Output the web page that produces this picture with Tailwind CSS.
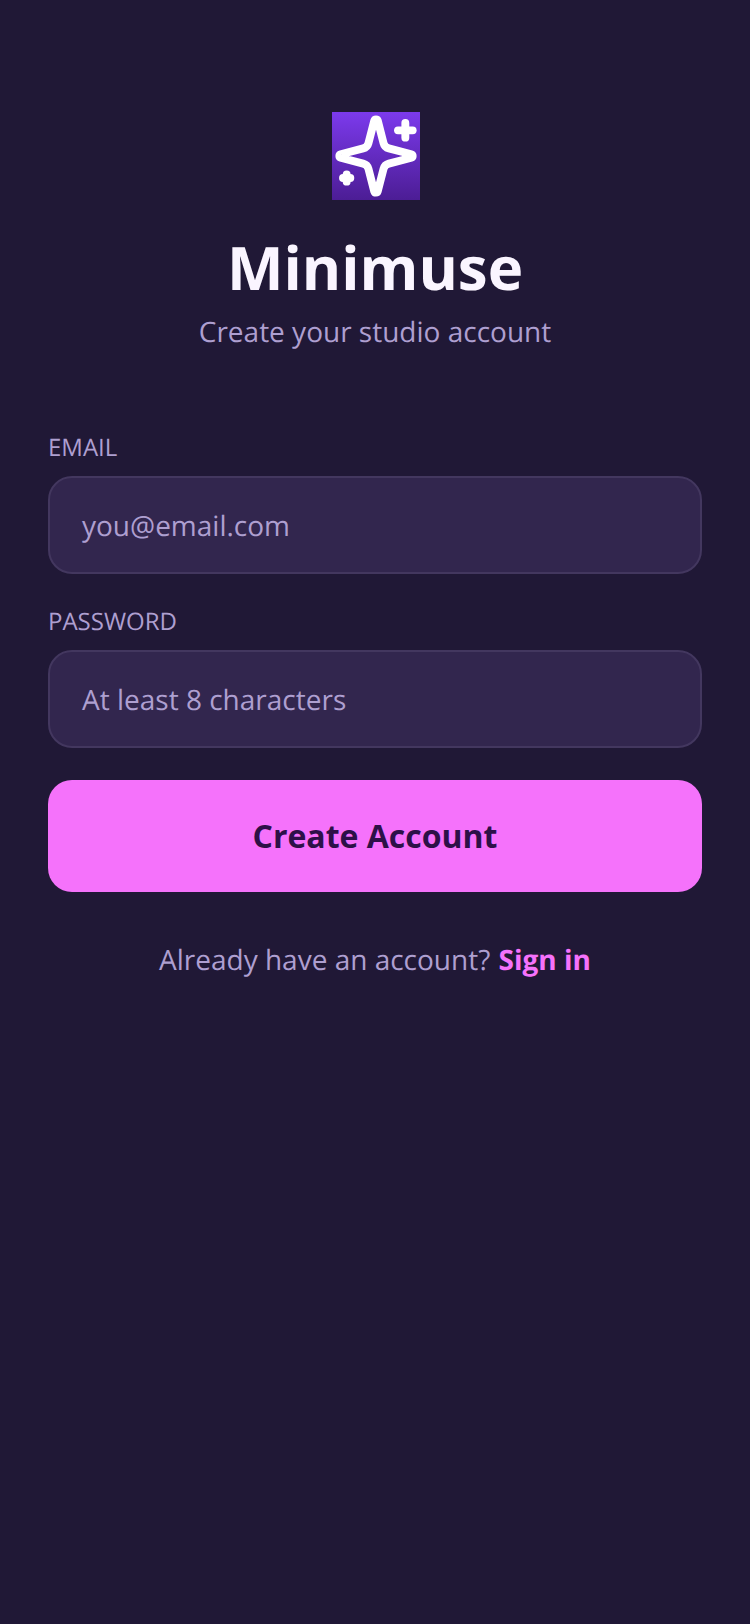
<!doctype html>
<html>
<head>
<meta charset="utf-8">
<script src="https://cdn.jsdelivr.net/npm/@tailwindcss/browser@4"></script>
</head>
<body class="bg-[#201836] font-['Open_Sans',sans-serif] antialiased [text-rendering:geometricPrecision]">
<main class="w-[750px] h-[1624px] px-12 pt-28 flex flex-col">
  <div class="flex flex-col items-center">
    <div class="ml-[2px] w-[88px] h-[88px] bg-gradient-to-b from-[#7c3aed] to-[#4c1d95]">
      <svg width="88" height="88" viewBox="0 0 24 24" fill="none" stroke="white" stroke-width="2.15" stroke-linecap="round" stroke-linejoin="round">
        <path d="M9.937 15.5A2 2 0 0 0 8.5 14.063l-6.135-1.582a.5.5 0 0 1 0-.962L8.5 9.936A2 2 0 0 0 9.937 8.5l1.582-6.135a.5.5 0 0 1 .963 0L14.063 8.5A2 2 0 0 0 15.5 9.937l6.135 1.581a.5.5 0 0 1 0 .964L15.5 14.063a2 2 0 0 0-1.437 1.437l-1.582 6.135a.5.5 0 0 1-.963 0z"/>
        <path d="M20 3v4"/>
        <path d="M22 5h-4"/>
        <path d="M4 17v2"/>
        <path d="M5 18H3"/>
      </svg>
    </div>
    <h1 class="mt-[31px] text-[60px] leading-[72px] font-bold text-[#faf5ff]">Minimuse</h1>
    <p class="mt-[10px] text-[28px] leading-[38px] text-[#ae9fd0]">Create your studio account</p>
  </div>
  <form class="mt-[81px] flex flex-col">
    <label class="text-[24px] leading-[32px] text-[#ae9fd0]">EMAIL</label>
    <div class="mt-3 h-[98px] rounded-3xl border-2 border-[#43375f] bg-[#32264e] px-8 pt-[2px] flex items-center text-[28px] text-[#ae9fd0]">you@email.com</div>
    <label class="mt-8 text-[24px] leading-[32px] text-[#ae9fd0]">PASSWORD</label>
    <div class="mt-3 h-[98px] rounded-3xl border-2 border-[#43375f] bg-[#32264e] px-8 pt-[2px] flex items-center text-[28px] text-[#ae9fd0]">At least 8 characters</div>
    <button type="button" class="mt-8 h-[112px] rounded-3xl bg-[#f572fb] text-[32px] font-bold text-[#2d1048]">Create Account</button>
  </form>
  <p class="mt-[49px] text-center text-[28px] leading-[38px] text-[#ae9fd0]">Already have an account? <span class="ml-px font-bold text-[#f572fb]">Sign in</span></p>
</main>
</body>
</html>
